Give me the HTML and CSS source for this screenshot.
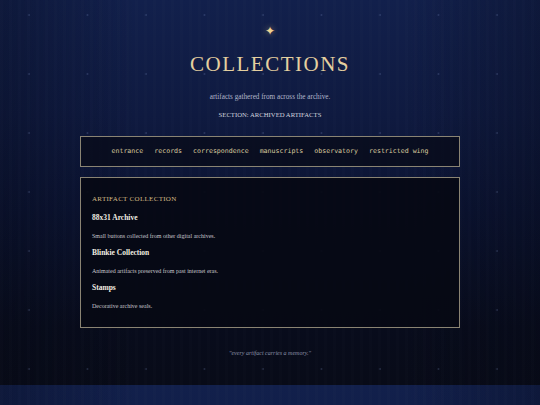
FILE: index.html
```html
<!DOCTYPE html>
<html lang="en">
<head>
  <meta charset="UTF-8" />
  <meta name="viewport" content="width=device-width, initial-scale=1.0" />
  <title>Collections - The Archive</title>
  <link rel="stylesheet" href="styles.css">
</head>
<body>
  <header class="page-header">
    <div class="star">✦</div>
    <h1>COLLECTIONS</h1>
    <p class="tagline">artifacts gathered from across the archive.</p>
    <p class="section-label">SECTION: ARCHIVED ARTIFACTS</p>
  </header>

  <nav class="archive-nav">
    <a href="#">entrance</a>
    <a href="#">records</a>
    <a href="#">correspondence</a>
    <a href="#">manuscripts</a>
    <a href="#">observatory</a>
    <a href="#">restricted wing</a>
  </nav>

  <main class="collection-box">
    <h2>ARTIFACT COLLECTION</h2>
    <div class="item">
      <h3>88x31 Archive</h3>
      <p>Small buttons collected from other digital archives.</p>
    </div>
    <div class="item">
      <h3>Blinkie Collection</h3>
      <p>Animated artifacts preserved from past internet eras.</p>
    </div>
    <div class="item">
      <h3>Stamps</h3>
      <p>Decorative archive seals.</p>
    </div>
  </main>

  <footer>"every artifact carries a memory."</footer>
</body>
</html>
```

FILE: styles.css
```css
* {
  margin: 0;
  padding: 0;
  box-sizing: border-box;
}
body {
  font-family: 'Liberation Serif', 'Times New Roman', serif;
  color: #c8cad4;
  padding: 0 0 28px;
  background:
    radial-gradient(circle at 29px 15px, rgba(140,160,215,0.22) 0.6px, transparent 1.1px) 0 0 / 58.5px 59px,
    repeating-linear-gradient(90deg, rgba(255,255,255,0.006) 0 3px, transparent 3px 9px),
    linear-gradient(90deg, rgba(5,8,20,0.3), rgba(5,8,20,0) 25%, rgba(5,8,20,0) 75%, rgba(5,8,20,0.3)),
    linear-gradient(180deg, #12204c 0%, #0f1a40 30%, #0b1331 55%, #080c1c 85%, #080b18 100%);
}
.page-header {
  padding-top: 22px;
  text-align: center;
}
.star {
  font-family: 'DejaVu Sans', sans-serif;
  font-size: 12px;
  line-height: 18px;
  color: #f0d391;
  text-shadow: 0 0 6px rgba(240,200,120,0.6);
}
.page-header h1 {
  margin-top: 11px;
  font-size: 21px;
  line-height: 26px;
  font-weight: normal;
  letter-spacing: 1.5px;
  color: #e4cf9f;
}
.tagline {
  margin-top: 15px;
  font-size: 7.2px;
  line-height: 10px;
  color: #b3b7ca;
}
.section-label {
  margin-top: 8px;
  font-size: 6.7px;
  line-height: 10px;
  color: #d2d4de;
}
.archive-nav {
  width: 380px;
  margin: 16px auto 0;
  padding: 10px 0;
  border: 1px solid #8a8473;
  background: rgba(8,11,24,0.75);
  display: flex;
  justify-content: center;
  gap: 11px;
}
.archive-nav a {
  font-family: 'DejaVu Sans Mono', monospace;
  font-size: 6.6px;
  line-height: 9px;
  color: #d8c99e;
  text-decoration: none;
}
.collection-box {
  width: 380px;
  margin: 10px auto 0;
  padding: 16px 11px 17px;
  border: 1px solid #8a8473;
  background: rgba(7,9,20,0.92);
}
.collection-box h2 {
  font-size: 7px;
  line-height: 10px;
  font-weight: normal;
  letter-spacing: 0.3px;
  color: #d3b985;
}
.item h3 {
  margin-top: 9px;
  font-size: 7.5px;
  line-height: 10px;
  color: #f1ede2;
}
.item + .item h3 {
  margin-top: 8px;
}
.item p {
  margin-top: 9px;
  font-size: 6px;
  line-height: 8px;
  color: #c6c7cd;
}
footer {
  margin-top: 21px;
  text-align: center;
  font-size: 6px;
  line-height: 8px;
  font-style: italic;
  color: #8b91a8;
}
```
